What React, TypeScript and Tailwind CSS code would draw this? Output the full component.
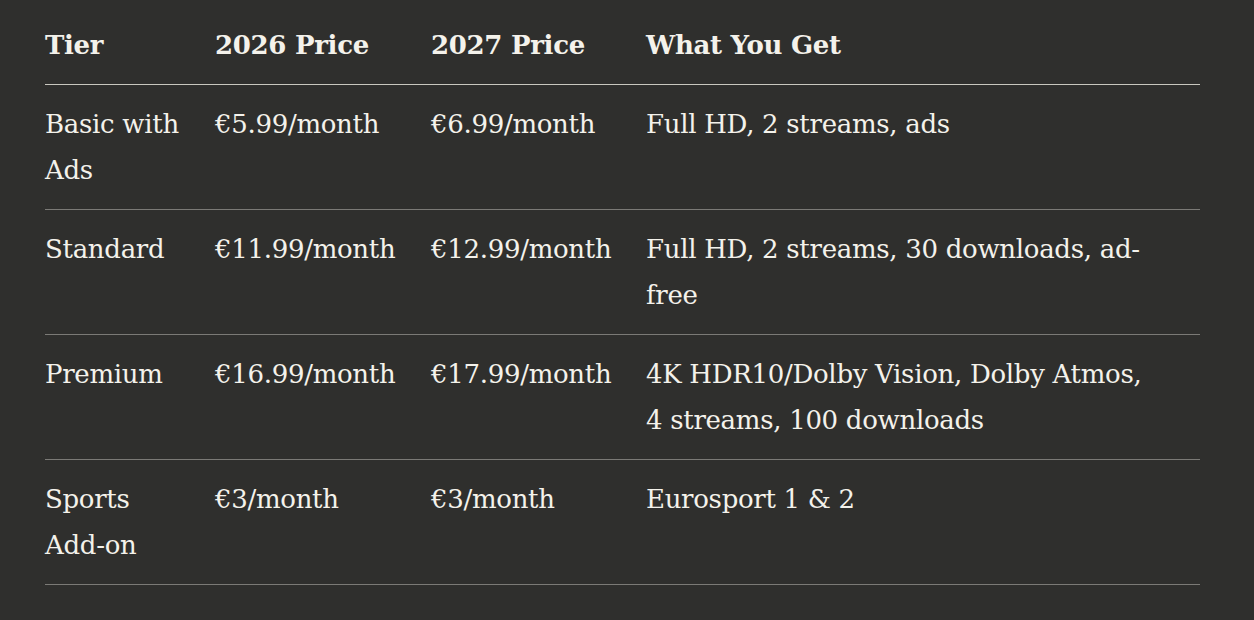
import { Fragment } from "react";

const rows = [
  { tier: "Basic with Ads", p26: "€5.99/month", p27: "€6.99/month", get: "Full HD, 2 streams, ads" },
  { tier: "Standard", p26: "€11.99/month", p27: "€12.99/month", get: "Full HD, 2 streams, 30 downloads, ad-free" },
  { tier: "Premium", p26: "€16.99/month", p27: "€17.99/month", get: "4K HDR10/Dolby Vision, Dolby Atmos, 4 streams, 100 downloads" },
  { tier: "Sports Add-on", p26: "€3/month", p27: "€3/month", get: "Eurosport 1 & 2" },
];

export default function App() {
  return (
    <div
      className="min-h-[620px] w-full bg-[#2f2f2d] text-[#f4f2eb] px-[45px] pt-[6px]"
      style={{ fontFamily: '"DejaVu Serif", "Liberation Serif", serif' }}
    >
      <table className="w-[1155px] border-collapse table-fixed text-[26px] leading-[46px] tracking-[-0.3px]">
        <colgroup>
          <col className="w-[170px]" />
          <col className="w-[216px]" />
          <col className="w-[215px]" />
          <col />
        </colgroup>
        <thead>
          <tr className="border-b border-[#c9c7bf] text-left">
            <th className="py-4 pr-4 font-bold">Tier</th>
            <th className="py-4 pr-4 font-bold">2026 Price</th>
            <th className="py-4 pr-4 font-bold">2027 Price</th>
            <th className="py-4 pr-4 font-bold">What You Get</th>
          </tr>
        </thead>
        <tbody>
          {rows.map((r) => (
            <tr key={r.tier} className="border-b border-[#7b7a76] align-top">
              <td className="py-4 pr-4">
                {r.tier.split(" ").map((w, i) => (
                  <Fragment key={i}>
                    {i > 0 ? " " : ""}
                    <span className="whitespace-nowrap">{w}</span>
                  </Fragment>
                ))}
              </td>
              <td className="py-4 pr-2 whitespace-nowrap">{r.p26}</td>
              <td className="py-4 pr-2 whitespace-nowrap">{r.p27}</td>
              <td className="py-4 pr-[42px]">{r.get}</td>
            </tr>
          ))}
        </tbody>
      </table>
    </div>
  );
}
